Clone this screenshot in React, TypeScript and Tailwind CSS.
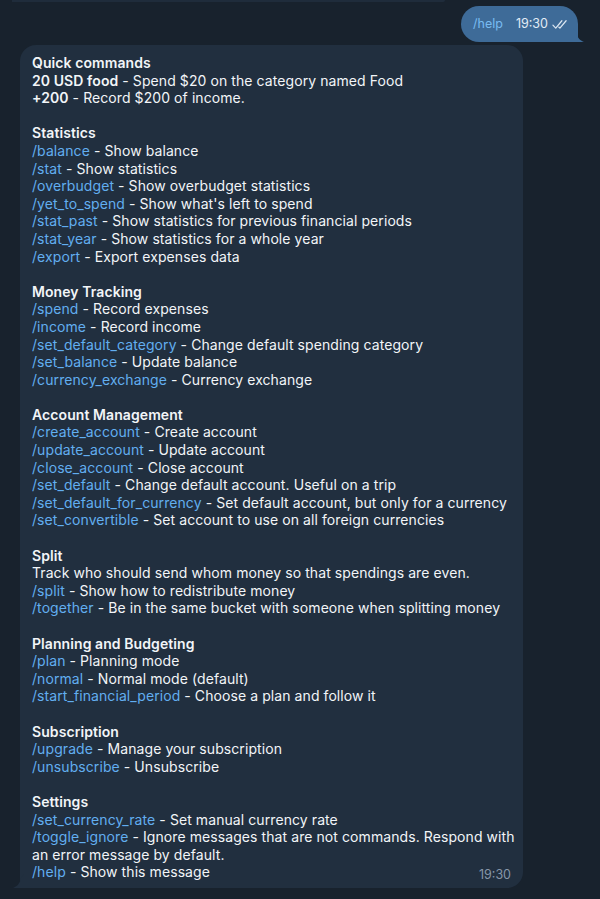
import React from "react";

type Seg = { t: string; k?: "cmd" | "b" };
type Line = Seg[] | null;

const c = (cmd: string, rest: string): Line => [{ t: cmd, k: "cmd" }, { t: " - " + rest }];
const h = (t: string): Line => [{ t, k: "b" }];

const lines: Line[] = [
  h("Quick commands"),
  [{ t: "20 USD food", k: "b" }, { t: " - Spend $20 on the category named Food" }],
  [{ t: "+200", k: "b" }, { t: " - Record $200 of income." }],
  null,
  h("Statistics"),
  c("/balance", "Show balance"),
  c("/stat", "Show statistics"),
  c("/overbudget", "Show overbudget statistics"),
  c("/yet_to_spend", "Show what's left to spend"),
  c("/stat_past", "Show statistics for previous financial periods"),
  c("/stat_year", "Show statistics for a whole year"),
  c("/export", "Export expenses data"),
  null,
  h("Money Tracking"),
  c("/spend", "Record expenses"),
  c("/income", "Record income"),
  c("/set_default_category", "Change default spending category"),
  c("/set_balance", "Update balance"),
  c("/currency_exchange", "Currency exchange"),
  null,
  h("Account Management"),
  c("/create_account", "Create account"),
  c("/update_account", "Update account"),
  c("/close_account", "Close account"),
  c("/set_default", "Change default account. Useful on a trip"),
  c("/set_default_for_currency", "Set default account, but only for a currency"),
  c("/set_convertible", "Set account to use on all foreign currencies"),
  null,
  h("Split"),
  [{ t: "Track who should send whom money so that spendings are even." }],
  c("/split", "Show how to redistribute money"),
  c("/together", "Be in the same bucket with someone when splitting money"),
  null,
  h("Planning and Budgeting"),
  c("/plan", "Planning mode"),
  c("/normal", "Normal mode (default)"),
  c("/start_financial_period", "Choose a plan and follow it"),
  null,
  h("Subscription"),
  c("/upgrade", "Manage your subscription"),
  c("/unsubscribe", "Unsubscribe"),
  null,
  h("Settings"),
  c("/set_currency_rate", "Set manual currency rate"),
  c("/toggle_ignore", "Ignore messages that are not commands. Respond with"),
  [{ t: "an error message by default." }],
];

function Segs({ line }: { line: Seg[] }) {
  return (
    <>
      {line.map((s, i) =>
        s.k === "cmd" ? (
          <span key={i} className="text-[#62aef0]">{s.t}</span>
        ) : s.k === "b" ? (
          <span key={i} className="font-semibold">{s.t}</span>
        ) : (
          <span key={i}>{s.t}</span>
        )
      )}
    </>
  );
}

function Checks() {
  return (
    <svg width="16" height="11" viewBox="0 0 17 11" fill="none" stroke="#dce7f2" strokeWidth="1.3" strokeLinecap="round" strokeLinejoin="round">
      <path d="M1 6.2 L4 9.3 L10.5 1.5" />
      <path d="M7.2 8.2 L8.4 9.3 L15 1.5" />
    </svg>
  );
}

export default function App() {
  return (
    <div
      className="w-[600px] h-[899px] bg-[#18222d] overflow-hidden relative text-white"
      style={{ fontFamily: "Inter, 'Noto Sans', sans-serif" }}
    >
      {/* previous bubble bottom */}
      <div className="ml-[12px] w-[433px] h-[2px] bg-[#1f2c3b] rounded-br-[2px]" />

      {/* outgoing */}
      <div className="flex justify-end pr-[22px] mt-[4px]">
        <div className="relative">
          <div className="h-[36px] w-[117px] rounded-[18px] rounded-br-[4px] bg-[#3e6b98] flex items-center pl-[12px] gap-[13px]">
            <span className="text-[12.5px] text-[#78bbf2]">/help</span>
            <span className="flex items-center gap-[4px]">
              <span className="text-[12.5px] text-[#e2ecf6]">19:30</span>
              <Checks />
            </span>
          </div>
          <svg className="absolute right-[-7px] bottom-0" width="12" height="14" viewBox="0 0 12 14">
            <path d="M0 0 L0 14 L11 14 C8 13 4 10 3 4 Z" fill="#3e6b98" />
          </svg>
        </div>
      </div>

      {/* incoming */}
      <div className="pl-[20px] mt-[3px]">
        <div className="relative w-[503px]">
          <div className="bg-[#212f3f] rounded-[16px] rounded-bl-[4px] pl-[12px] pr-[10px] pt-[9px] pb-[7px] text-[14px] leading-[17.6px] tracking-[0.08px] text-[#f2f5f8]">
            {lines.map((l, i) =>
              l === null ? (
                <div key={i} className="h-[17.6px]" />
              ) : (
                <div key={i} className="whitespace-nowrap">
                  <Segs line={l} />
                </div>
              )
            )}
            <div className="flex justify-between items-end">
              <span className="whitespace-nowrap">
                <span className="text-[#62aef0]">/help</span> - Show this message
              </span>
              <span className="text-[12.5px] text-[#8796a8] leading-[14px] mb-[-1px] mr-[2px] tracking-normal">19:30</span>
            </div>
          </div>
          <svg className="absolute left-[-8px] bottom-0" width="12" height="14" viewBox="0 0 12 14">
            <path d="M12 0 L12 14 L1 14 C4 13 8 10 9 4 Z" fill="#212f3f" />
          </svg>
        </div>
      </div>
    </div>
  );
}
